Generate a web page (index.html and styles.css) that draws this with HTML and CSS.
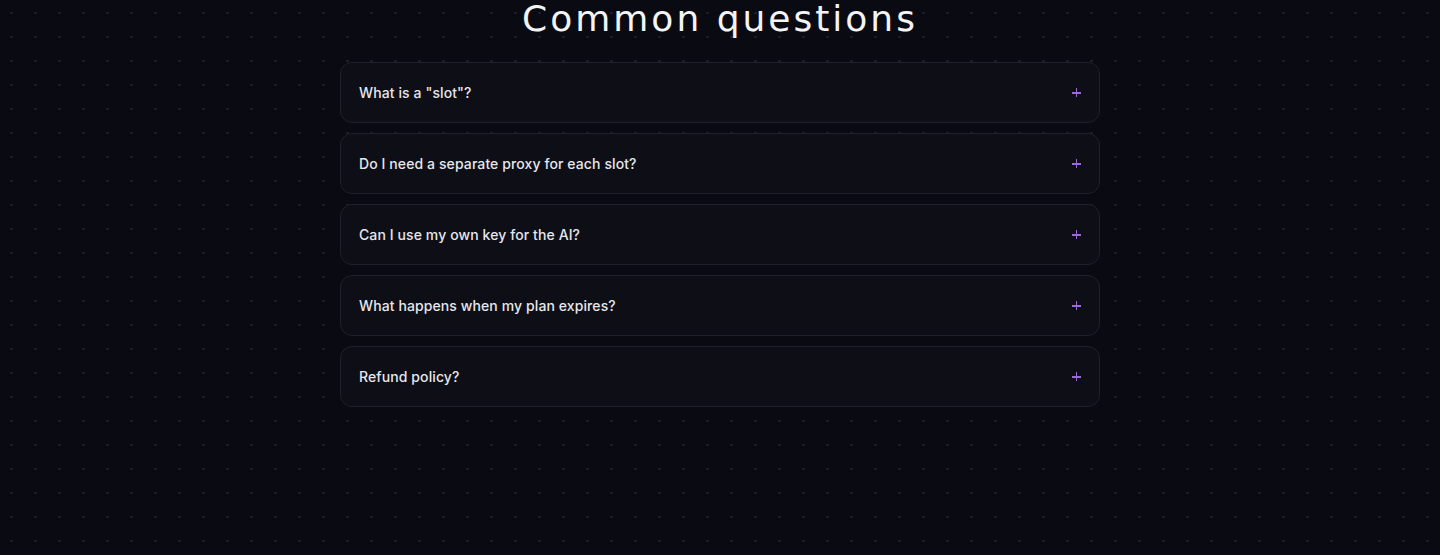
FILE: index.html
```html
<!DOCTYPE html>
<html lang="en">
<head>
<meta charset="utf-8">
<title>Common questions</title>
<link rel="stylesheet" href="styles.css">
</head>
<body>
<section class="faq">
  <h2 class="faq-title">Common questions</h2>
  <div class="faq-list">
    <div class="faq-item"><span class="faq-q">What is a "slot"?</span><span class="faq-plus"></span></div>
    <div class="faq-item"><span class="faq-q">Do I need a separate proxy for each slot?</span><span class="faq-plus"></span></div>
    <div class="faq-item"><span class="faq-q">Can I use my own key for the AI?</span><span class="faq-plus"></span></div>
    <div class="faq-item"><span class="faq-q">What happens when my plan expires?</span><span class="faq-plus"></span></div>
    <div class="faq-item"><span class="faq-q">Refund policy?</span><span class="faq-plus"></span></div>
  </div>
</section>
</body>
</html>
```
FILE: styles.css
```css
html, body {
  margin: 0;
  height: 100%;
}
body {
  background-color: #0a0b12;
  background-image: radial-gradient(circle at center, #25262e 0.8px, transparent 1.4px);
  background-size: 24px 24px;
  background-position: -0.5px 1px;
  font-family: Inter, "Noto Sans", sans-serif;
  color: #e6e6ec;
}
.faq {
  display: flex;
  flex-direction: column;
  align-items: center;
}
.faq-title {
  margin: 0;
  font-family: "DejaVu Sans", sans-serif;
  font-weight: 400;
  font-size: 36px;
  line-height: 38px;
  letter-spacing: 3px;
  color: #f4f4f7;
  height: 62px;
}
.faq-list {
  width: 760px;
  display: flex;
  flex-direction: column;
  gap: 10px;
}
.faq-item {
  box-sizing: border-box;
  height: 61px;
  border: 1px solid #1f2029;
  border-radius: 12px;
  background: #0d0e16;
  display: flex;
  align-items: center;
  justify-content: space-between;
  padding: 0 18px;
}
.faq-q {
  font-size: 14px;
  font-weight: 500;
  letter-spacing: 0.1px;
}
.faq-plus {
  position: relative;
  width: 9px;
  height: 9px;
}
.faq-plus::before,
.faq-plus::after {
  content: "";
  position: absolute;
  background: #9a6bd8;
}
.faq-plus::before {
  left: 0;
  top: 4px;
  width: 9px;
  height: 1.5px;
}
.faq-plus::after {
  left: 3.75px;
  top: 0;
  width: 1.5px;
  height: 9px;
}
```
